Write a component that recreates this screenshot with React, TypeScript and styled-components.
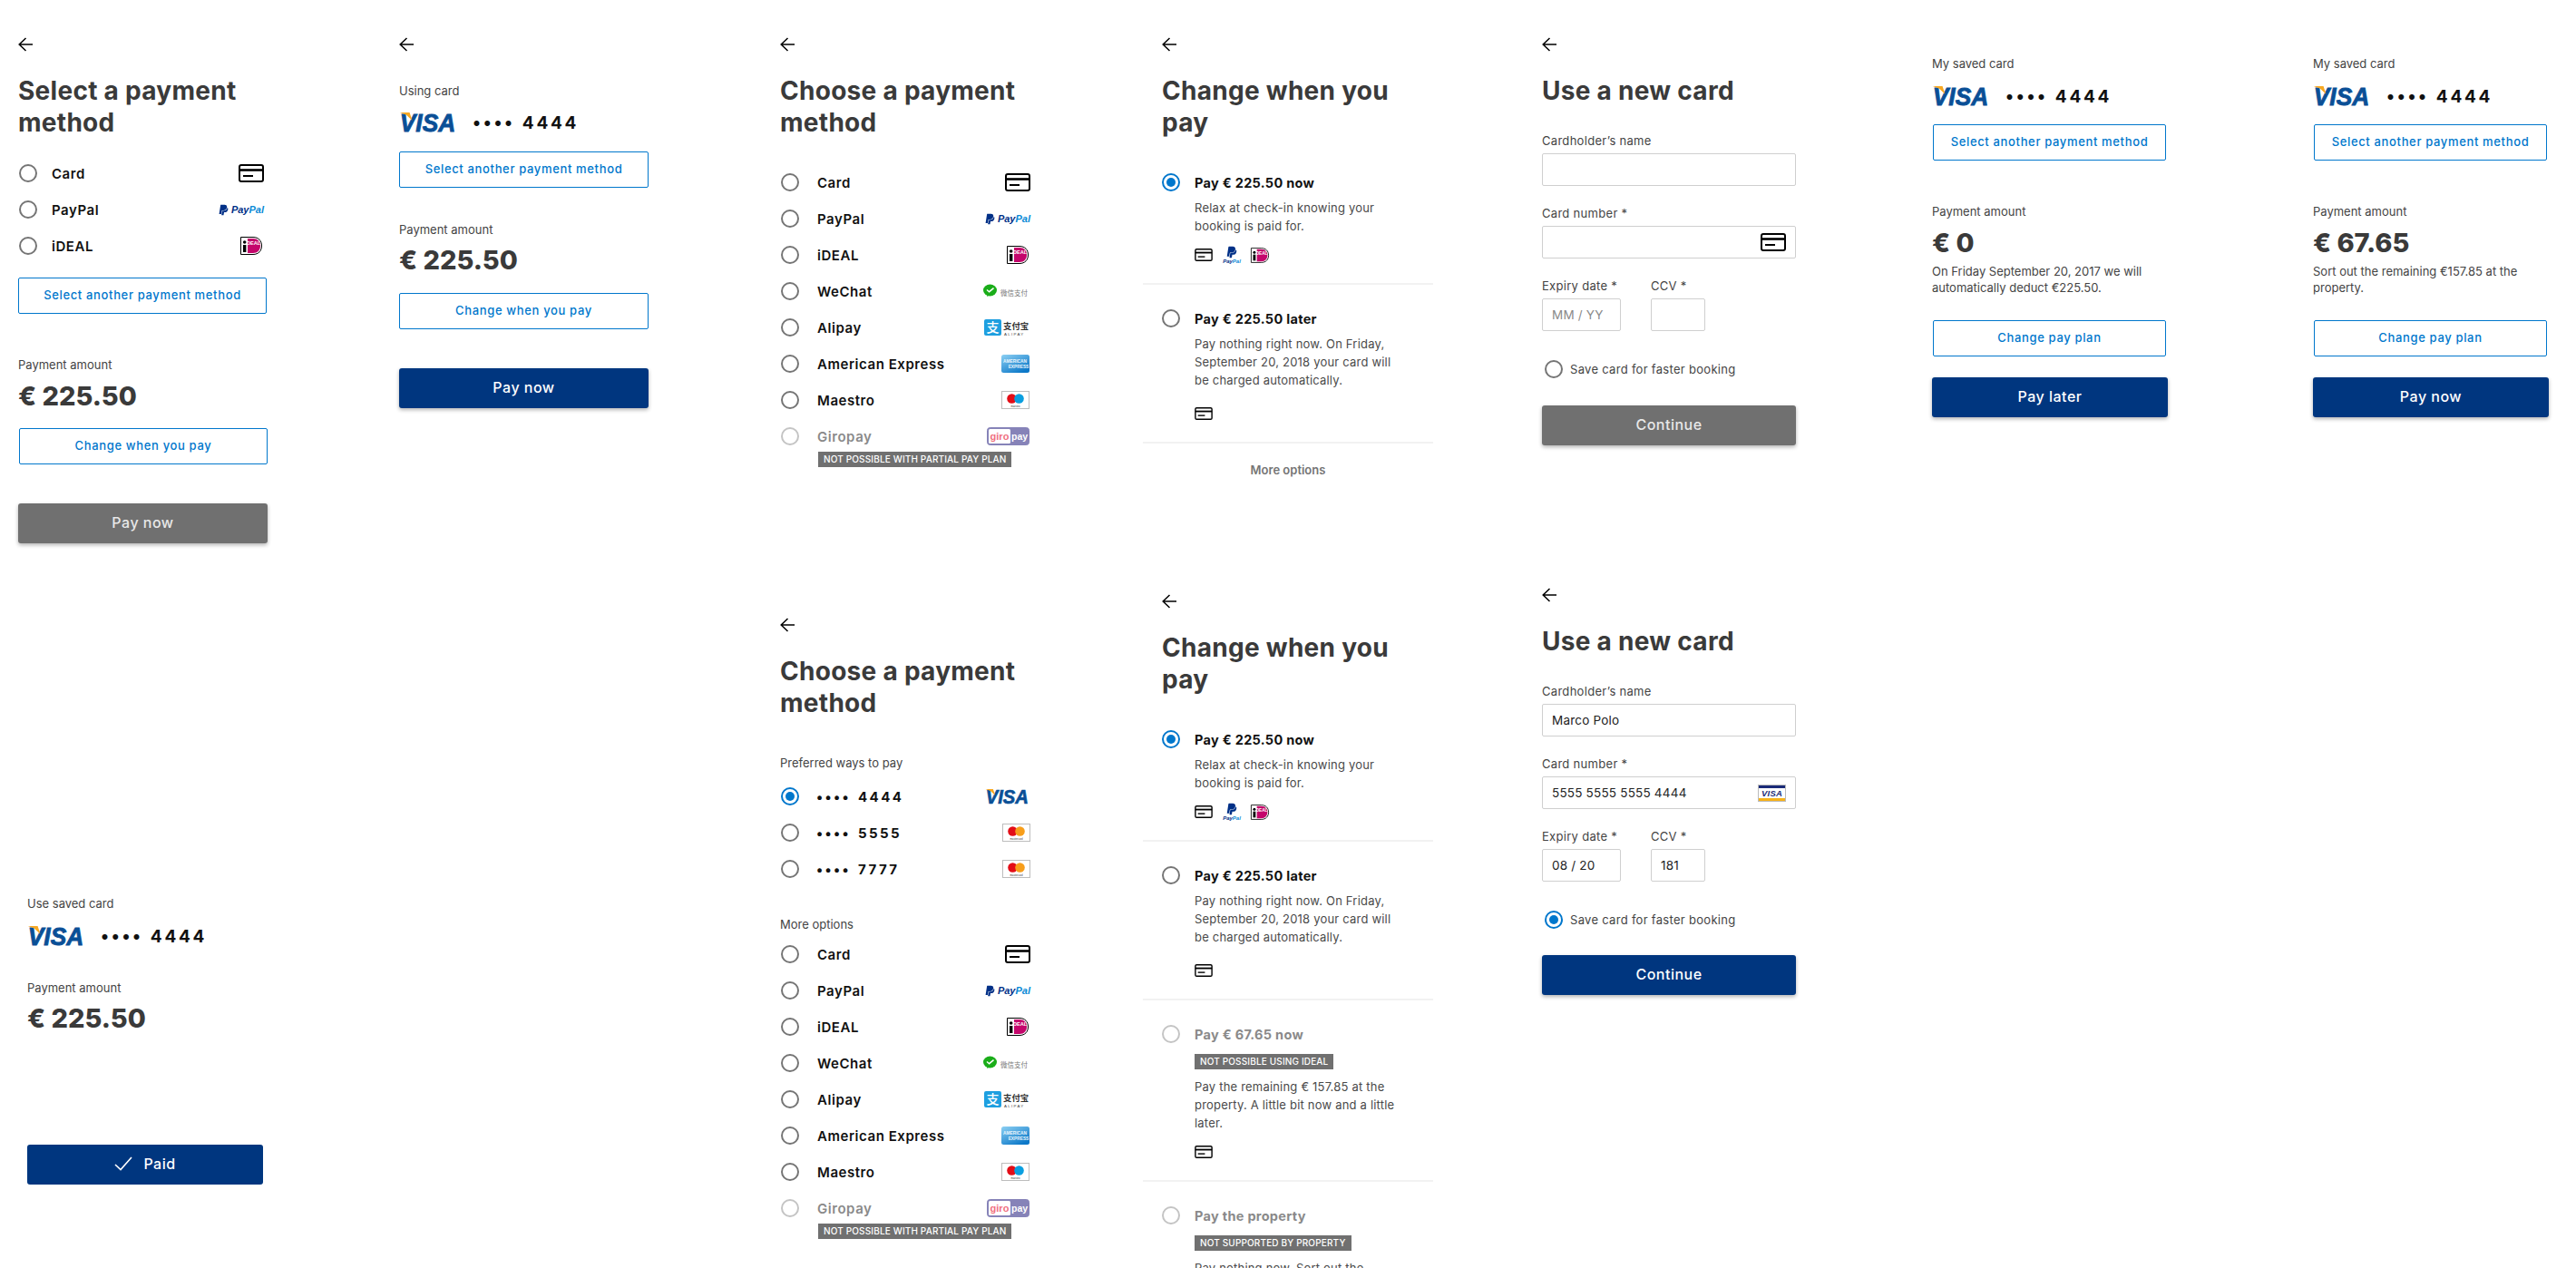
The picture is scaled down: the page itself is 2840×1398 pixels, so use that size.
import * as React from 'react';
import styled, { createGlobalStyle } from 'styled-components';
import { FaPaypal } from 'react-icons/fa';

const GlobalStyle = createGlobalStyle`
  html, body {
    margin: 0;
    padding: 0;
    width: 2840px;
    height: 1398px;
    overflow: hidden;
    background: #fff;
    font-family: Inter, "Noto Sans CJK SC", sans-serif;
    color: #444;
  }
  * { box-sizing: border-box; }
  svg { overflow: visible; }
`;

interface Spaced { $mt?: number; }

const Page = styled.div`
  display: flex;
  width: 2840px;
  height: 1398px;
  overflow: hidden;
`;
const Column = styled.div<{ $width: number }>`
  display: grid;
  grid-template-rows: 640px 758px;
  flex: none;
  width: ${p => p.$width}px;
`;
const Screen = styled.section<{ $top?: number; $left?: number; $right?: number }>`
  padding: ${p => p.$top ?? 41}px ${p => p.$right ?? 0}px 0 ${p => p.$left ?? 20}px;
`;
const BackRow = styled.div`
  height: 16px;
  line-height: 0;
`;
const Heading = styled.h1<Spaced>`
  max-width: 280px;
  margin: ${p => p.$mt ?? 26}px 0 0;
  font-size: 28px;
  line-height: 35px;
  font-weight: 700;
  letter-spacing: 0.28px;
  color: #3a3a3a;
`;
const Label = styled.div<Spaced>`
  margin-top: ${p => p.$mt ?? 0}px;
  font-size: 13px;
  line-height: 20px;
  color: #444;
`;
const CardRow = styled.div<Spaced>`
  display: flex;
  align-items: center;
  gap: 16px;
  height: 22px;
  margin-top: ${p => p.$mt ?? 0}px;
`;
const CardDigits = styled.span<{ $small?: boolean }>`
  display: inline-flex;
  gap: 8px;
  font-size: ${p => (p.$small ? 15 : 19)}px;
  font-weight: 700;
  letter-spacing: ${p => (p.$small ? 2.4 : 2.7)}px;
  color: #111;
  white-space: nowrap;
`;
const Amount = styled.div<Spaced>`
  margin-top: ${p => p.$mt ?? 0}px;
  font-size: 29px;
  line-height: 36px;
  font-weight: 800;
  color: #3a3a3a;
`;
const Note = styled.p<Spaced>`
  max-width: 240px;
  margin: ${p => p.$mt ?? 0}px 0 0;
  font-size: 13px;
  line-height: 18px;
  color: #444;
`;
const OutlineButton = styled.div<Spaced & { $width: number; $shift?: number }>`
  display: flex;
  align-items: center;
  justify-content: center;
  width: ${p => p.$width}px;
  height: 40px;
  margin: ${p => p.$mt ?? 0}px 0 0 ${p => p.$shift ?? 0}px;
  padding-bottom: 2px;
  border: 1px solid #0077cc;
  border-radius: 2px;
  font-size: 13px;
  font-weight: 500;
  letter-spacing: 0.65px;
  color: #0077cc;
`;
const SolidButton = styled.div<Spaced & { $width: number; $muted?: boolean; $flat?: boolean }>`
  display: flex;
  align-items: center;
  justify-content: center;
  gap: 12px;
  width: ${p => p.$width}px;
  height: 44px;
  margin-top: ${p => p.$mt ?? 0}px;
  padding-bottom: 2px;
  border-radius: 3px;
  background: ${p => (p.$muted ? '#707070' : '#00367f')};
  box-shadow: ${p => (p.$flat ? 'none' : '0 2px 4px rgba(0, 0, 0, 0.3)')};
  font-size: 16px;
  font-weight: 500;
  letter-spacing: 0.5px;
  color: ${p => (p.$muted ? '#e8e8e8' : '#fff')};
`;
const MethodList = styled.div<Spaced & { $width: number }>`
  width: ${p => p.$width}px;
  margin-top: ${p => p.$mt ?? 18}px;
`;
const MethodRow = styled.div<{ $gap: number }>`
  display: flex;
  align-items: center;
  gap: ${p => p.$gap}px;
  height: 40px;
  padding-left: 1px;
`;
const MethodName = styled.span<{ $disabled?: boolean }>`
  flex: 1;
  font-size: 15px;
  font-weight: 600;
  letter-spacing: 0.55px;
  color: ${p => (p.$disabled ? '#8a8a8a' : '#111')};
`;
const Radio = styled.span<{ $checked?: boolean; $disabled?: boolean }>`
  display: flex;
  align-items: center;
  justify-content: center;
  flex: none;
  width: 20px;
  height: 20px;
  border-radius: 50%;
  border: 2px solid ${p => (p.$checked ? '#0077cc' : p.$disabled ? '#c4c4c4' : '#757575')};
  &::after {
    content: '';
    display: ${p => (p.$checked ? 'block' : 'none')};
    width: 10px;
    height: 10px;
    border-radius: 50%;
    background: #0077cc;
  }
`;
const Notice = styled.span<Spaced & { $left?: number }>`
  display: block;
  width: fit-content;
  height: 17px;
  margin: ${p => p.$mt ?? 0}px 0 0 ${p => p.$left ?? 0}px;
  padding: 0 6px;
  background: #707070;
  font-size: 10px;
  line-height: 17px;
  font-weight: 500;
  letter-spacing: 0.15px;
  color: #fff;
  white-space: nowrap;
`;
const PlanOption = styled.div<Spaced>`
  display: grid;
  grid-template-columns: 36px 1fr;
  margin-top: ${p => p.$mt ?? 27}px;
  padding-left: 21px;
`;
const PlanTitle = styled.div<{ $disabled?: boolean }>`
  padding-top: 1px;
  font-size: 14.5px;
  line-height: 20px;
  font-weight: 700;
  letter-spacing: 0.3px;
  color: ${p => (p.$disabled ? '#8a8a8a' : '#111')};
`;
const PlanText = styled.p<Spaced>`
  margin: ${p => p.$mt ?? 7}px 0 0;
  max-width: 234px;
  font-size: 13px;
  line-height: 20px;
  letter-spacing: 0.2px;
  color: #4a4a4a;
`;
const PlanIcons = styled.div<Spaced>`
  display: flex;
  align-items: center;
  gap: 11px;
  height: 20px;
  margin-top: ${p => p.$mt ?? 12}px;
`;
const Divider = styled.hr<Spaced>`
  height: 2px;
  margin: ${p => p.$mt ?? 21}px 0 0;
  border: 0;
  background: #f2f2f2;
`;
const MoreOptions = styled.div`
  margin-top: 19px;
  font-size: 13px;
  line-height: 20px;
  font-weight: 600;
  text-align: center;
  color: #757575;
`;
const FieldLabel = styled.div<Spaced>`
  margin-top: ${p => p.$mt ?? 20}px;
  font-size: 13px;
  line-height: 20px;
  letter-spacing: 0.3px;
  color: #444;
`;
const FieldBox = styled.div<{ $width: number; $placeholder?: boolean }>`
  display: flex;
  align-items: center;
  justify-content: space-between;
  width: ${p => p.$width}px;
  height: 36px;
  margin-top: 4px;
  padding: 0 10px;
  border: 1px solid #cfcfcf;
  border-radius: 2px;
  font-size: 13.5px;
  letter-spacing: 0.2px;
  color: ${p => (p.$placeholder ? '#8a8a8a' : '#222')};
`;
const FieldPair = styled.div`
  display: flex;
  gap: 33px;
`;
const SaveRow = styled.div<Spaced>`
  display: flex;
  align-items: center;
  gap: 8px;
  height: 20px;
  margin-top: ${p => p.$mt ?? 32}px;
  padding-left: 3px;
  font-size: 13px;
  letter-spacing: 0.3px;
  color: #444;
`;
const PlanHead = styled.div`
  padding: 0 20px 0 21px;
`;
const LogoWrap = styled.span`
  display: inline-flex;
  align-items: center;
  gap: 2px;
`;
const PayPalWord = styled.span`
  font-family: "Liberation Sans", sans-serif;
  font-size: 11px;
  font-weight: 700;
  font-style: italic;
  color: #003087;
  em { color: #0a8ad6; }
`;
const PayPalStack = styled.span`
  display: flex;
  flex-direction: column;
  align-items: center;
  width: 20px;
  line-height: 1;
  font-family: "Liberation Sans", sans-serif;
  font-size: 6px;
  font-weight: 700;
  font-style: italic;
  color: #003087;
  em { color: #0a8ad6; }
`;
const LogoSlot = styled.span<{ $inset?: number }>`
  display: flex;
  align-items: center;
  flex: none;
  margin-right: ${p => p.$inset ?? 0}px;
`;

const BackArrow = () => (
  <svg width="16" height="16" viewBox="0 0 16 16" fill="none" stroke="#000" strokeWidth="1.5">
    <path d="M16 8H1.5M8.5 1L1.2 8l7.3 7" />
  </svg>
);

const CardIcon = ({ small }: { small?: boolean }) => (
  <svg width={small ? 20 : 28} height={small ? 14 : 20} viewBox="0 0 28 20" fill="none" stroke="#000" strokeWidth="2">
    <rect x="1" y="1" width="26" height="18" rx="2" />
    <path d="M1 6.5h26" strokeWidth="2.6" />
    <path d="M5 13h11" />
  </svg>
);

const VisaLogo = ({ width = 65 }: { width?: number }) => (
  <svg width={width} height={width * 0.33} viewBox="0 0 65 22">
    <text x="0" y="21.5" fontFamily="'Liberation Sans', sans-serif" fontSize="29" fontWeight="700" fontStyle="italic" fill="#0a4f96" stroke="#0a4f96" strokeWidth="0.9" textLength="63" lengthAdjust="spacingAndGlyphs">VISA</text>
    <polygon points="0,0 11,0 14,9 7,2.5" fill="#f7a823" />
  </svg>
);

const VisaMini = () => (
  <svg width="31" height="19" viewBox="0 0 31 19">
    <rect x="0.5" y="0.5" width="30" height="18" fill="#fff" stroke="#bbb" />
    <rect x="1" y="1" width="29" height="3" fill="#1a2a78" />
    <rect x="1" y="15" width="29" height="3" fill="#f7b21a" />
    <text x="15.5" y="13" textAnchor="middle" fontFamily="'Liberation Sans', sans-serif" fontSize="9.5" fontWeight="700" fontStyle="italic" fill="#1a2a78">VISA</text>
  </svg>
);

const PayPalLogo = () => (
  <LogoWrap>
    <FaPaypal size={13} color="#003087" />
    <PayPalWord>Pay<em>Pal</em></PayPalWord>
  </LogoWrap>
);

const IdealLogo = ({ small }: { small?: boolean }) => (
  <svg width={small ? 20 : 24} height={small ? 17 : 20} viewBox="0 0 24 20">
    <path d="M.5.5H14c6 0 9.5 4 9.5 9.5S20 19.5 14 19.5H.5z" fill="#fff" stroke="#000" />
    <path d="M8 2h6c5 0 8 3.5 8 8s-3 8-8 8H8z" fill="#c4066b" />
    <rect x="3" y="9" width="3.4" height="8" fill="#000" />
    <circle cx="4.7" cy="6" r="1.8" fill="#000" />
    <text x="14.5" y="9" textAnchor="middle" fontFamily="'Liberation Sans', sans-serif" fontSize="5.6" fontWeight="700" fill="#fff">DEAL</text>
  </svg>
);

const WeChatLogo = () => (
  <svg width="50" height="16" viewBox="0 0 50 16">
    <ellipse cx="7.5" cy="7" rx="7.5" ry="6.5" fill="#1aad19" />
    <path d="M4 14l1-3 3 1z" fill="#1aad19" />
    <path d="M4 6.5l2.6 2.2L11.5 4.6" fill="none" stroke="#fff" strokeWidth="1.5" />
    <text x="19" y="12.5" fontFamily="'Noto Sans CJK SC', sans-serif" fontSize="7.5" fill="#777">微信支付</text>
  </svg>
);

const AlipayLogo = () => (
  <svg width="50" height="19" viewBox="0 0 50 19">
    <rect width="19" height="18" rx="2" fill="#1e9fe0" />
    <text x="9.5" y="14" textAnchor="middle" fontFamily="'Noto Sans CJK SC', sans-serif" fontSize="14" fontWeight="500" fill="#fff">支</text>
    <text x="21" y="11" fontFamily="'Noto Sans CJK SC', sans-serif" fontSize="9.4" fontWeight="700" fill="#333">支付宝</text>
    <text x="22" y="18" fontFamily="'Liberation Sans', sans-serif" fontSize="4.4" letterSpacing="1.3" fill="#444">ALIPAY</text>
  </svg>
);

const AmexLogo = () => (
  <svg width="31" height="20" viewBox="0 0 31 20">
    <defs>
      <linearGradient id="amex" x1="0" y1="0" x2="0.7" y2="1">
        <stop offset="0" stopColor="#8dd0f3" />
        <stop offset="1" stopColor="#0c78c8" />
      </linearGradient>
    </defs>
    <rect width="31" height="20" rx="2.5" fill="url(#amex)" />
    <text x="15" y="8.6" textAnchor="middle" fontFamily="'Liberation Sans', sans-serif" fontSize="4.8" fontWeight="700" fill="#eaf6fd">AMERICAN</text>
    <text x="19" y="14.8" textAnchor="middle" fontFamily="'Liberation Sans', sans-serif" fontSize="4.8" fontWeight="700" fill="#eaf6fd">EXPRESS</text>
  </svg>
);

const CircleCardLogo = ({ right, name }: { right: string; name: string }) => (
  <svg width="31" height="20" viewBox="0 0 31 20">
    <rect x="0.5" y="0.5" width="30" height="19" fill="#fff" stroke="#bdbdbd" />
    <circle cx="11.5" cy="8.5" r="5.3" fill="#e30d17" />
    <circle cx="19.5" cy="8.5" r="5.3" fill={right} />
    <text x="15.5" y="17.5" textAnchor="middle" fontFamily="'Liberation Sans', sans-serif" fontSize="2.8" fill="#333">{name}</text>
  </svg>
);

const GiropayLogo = () => (
  <svg width="47" height="20" viewBox="0 0 47 20">
    <rect x="0.5" y="0.5" width="46" height="19" rx="3" fill="#8683b8" stroke="#8683b8" />
    <rect x="2" y="2" width="24" height="16" rx="1.5" fill="#fff" />
    <text x="3.6" y="13.6" fontFamily="'Liberation Sans', sans-serif" fontSize="11" fontWeight="700" fill="#f0717f">giro</text>
    <text x="27" y="13.6" fontFamily="'Liberation Sans', sans-serif" fontSize="10.5" fontWeight="700" fill="#fff">pay</text>
  </svg>
);

const methods = [
  { name: 'Card', logo: <CardIcon />, inset: 0 },
  { name: 'PayPal', logo: <PayPalLogo />, inset: 0 },
  { name: 'iDEAL', logo: <IdealLogo />, inset: 2 },
  { name: 'WeChat', logo: <WeChatLogo />, inset: 2 },
  { name: 'Alipay', logo: <AlipayLogo />, inset: 1 },
  { name: 'American Express', logo: <AmexLogo />, inset: 1 },
  { name: 'Maestro', logo: <CircleCardLogo right="#0a9fe0" name="maestro" />, inset: 1 },
];

const Methods = ({ list, gap, giropay }: { list: typeof methods; gap: number; giropay?: boolean }) => (
  <>
    {list.map(m => (
      <MethodRow $gap={gap} key={m.name}>
        <Radio />
        <MethodName>{m.name}</MethodName>
        <LogoSlot $inset={m.inset}>{m.logo}</LogoSlot>
      </MethodRow>
    ))}
    {giropay && (
      <>
        <MethodRow $gap={gap}>
          <Radio $disabled />
          <MethodName $disabled>Giropay</MethodName>
          <LogoSlot $inset={1}><GiropayLogo /></LogoSlot>
        </MethodRow>
        <Notice $left={42} $mt={-3}>NOT POSSIBLE WITH PARTIAL PAY PLAN</Notice>
      </>
    )}
  </>
);

const Digits = ({ last, small }: { last: string; small?: boolean }) => (
  <CardDigits $small={small}>
    <span>••••</span>
    <span>{last}</span>
  </CardDigits>
);

const CardForm = ({ top, filled }: { top: number; filled?: boolean }) => (
  <Screen $top={top}>
    <BackRow><BackArrow /></BackRow>
    <Heading>Use a new card</Heading>
    <FieldLabel $mt={27}>Cardholder’s name</FieldLabel>
    <FieldBox $width={280}>{filled && 'Marco Polo'}</FieldBox>
    <FieldLabel>Card number *</FieldLabel>
    <FieldBox $width={280}>
      <span>{filled && '5555 5555 5555 4444'}</span>
      {filled ? <VisaMini /> : <CardIcon />}
    </FieldBox>
    <FieldPair>
      <div>
        <FieldLabel>Expiry date *</FieldLabel>
        <FieldBox $width={87} $placeholder={!filled}>{filled ? '08 / 20' : 'MM / YY'}</FieldBox>
      </div>
      <div>
        <FieldLabel>CCV *</FieldLabel>
        <FieldBox $width={60}>{filled && '181'}</FieldBox>
      </div>
    </FieldPair>
    <SaveRow>
      <Radio $checked={filled} />
      Save card for faster booking
    </SaveRow>
    <SolidButton $width={280} $mt={filled ? 29 : 30} $muted={!filled}>Continue</SolidButton>
  </Screen>
);

const PlanIconsAll = () => (
  <PlanIcons>
    <CardIcon small />
    <PayPalStack>
      <FaPaypal size={14} color="#003087" />
      <span>Pay<em>Pal</em></span>
    </PayPalStack>
    <IdealLogo small />
  </PlanIcons>
);
const PlanIconCard = ({ mt }: { mt?: number }) => (
  <PlanIcons $mt={mt}><CardIcon small /></PlanIcons>
);

const SavedCard = ({ amount, note, action }: { amount: string; note: React.ReactNode; action: string }) => (
  <Screen $top={60}>
    <Label>My saved card</Label>
    <CardRow $mt={15}><VisaLogo /><Digits last="4444" /></CardRow>
    <OutlineButton $width={257} $shift={1} $mt={20}>Select another payment method</OutlineButton>
    <Label $mt={46}>Payment amount</Label>
    <Amount $mt={7}>{amount}</Amount>
    <Note $mt={4}>{note}</Note>
    <OutlineButton $width={257} $shift={1} $mt={27}>Change pay plan</OutlineButton>
    <SolidButton $width={260} $mt={23}>{action}</SolidButton>
  </Screen>
);

const PlanBase = () => (
  <>
    <PlanHead>
      <BackRow><BackArrow /></BackRow>
      <Heading>Change when you pay</Heading>
    </PlanHead>
    <PlanOption $mt={38}>
      <Radio $checked />
      <div>
        <PlanTitle>Pay € 225.50 now</PlanTitle>
        <PlanText>Relax at check-in knowing your booking is paid for.</PlanText>
        <PlanIconsAll />
      </div>
    </PlanOption>
    <Divider />
    <PlanOption>
      <Radio />
      <div>
        <PlanTitle>Pay € 225.50 later</PlanTitle>
        <PlanText>Pay nothing right now. On Friday, September 20, 2018 your card will be charged automatically.</PlanText>
        <PlanIconCard mt={17} />
      </div>
    </PlanOption>
    <Divider />
  </>
);

export default function App() {
  return (
    <Page>
      <GlobalStyle />
      <Column $width={420}>
        <Screen>
          <BackRow><BackArrow /></BackRow>
          <Heading>Select a payment method</Heading>
          <MethodList $width={271}>
            <Methods list={methods.slice(0, 3)} gap={16} />
          </MethodList>
          <OutlineButton $width={274} $mt={15}>Select another payment method</OutlineButton>
          <Label $mt={46}>Payment amount</Label>
          <Amount $mt={7}>€ 225.50</Amount>
          <OutlineButton $width={274} $shift={1} $mt={17}>Change when you pay</OutlineButton>
          <SolidButton $width={275} $mt={43} $muted>Pay now</SolidButton>
        </Screen>
        <Screen $top={346} $left={30}>
          <Label>Use saved card</Label>
          <CardRow $mt={15}><VisaLogo /><Digits last="4444" /></CardRow>
          <Label $mt={36}>Payment amount</Label>
          <Amount $mt={6}>€ 225.50</Amount>
          <SolidButton $width={260} $mt={121} $flat>
            <svg width="20" height="16" viewBox="0 0 20 16" fill="none" stroke="#fff" strokeWidth="1.6">
              <path d="M1 9l6 5.5L19 1" />
            </svg>
            Paid
          </SolidButton>
        </Screen>
      </Column>
      <Column $width={420}>
        <Screen>
          <BackRow><BackArrow /></BackRow>
          <Label $mt={33}>Using card</Label>
          <CardRow $mt={14}><VisaLogo /><Digits last="4444" /></CardRow>
          <OutlineButton $width={275} $mt={21}>Select another payment method</OutlineButton>
          <Label $mt={36}>Payment amount</Label>
          <Amount $mt={6}>€ 225.50</Amount>
          <OutlineButton $width={275} $mt={18}>Change when you pay</OutlineButton>
          <SolidButton $width={275} $mt={43}>Pay now</SolidButton>
        </Screen>
      </Column>
      <Column $width={420}>
        <Screen>
          <BackRow><BackArrow /></BackRow>
          <Heading>Choose a payment method</Heading>
          <MethodList $width={276} $mt={28}>
            <Methods list={methods} gap={20} giropay />
          </MethodList>
        </Screen>
        <Screen>
          <BackRow><BackArrow /></BackRow>
          <Heading>Choose a payment method</Heading>
          <Label $mt={38}>Preferred ways to pay</Label>
          <MethodList $width={276} $mt={7}>
            <MethodRow $gap={19}>
              <Radio $checked />
              <MethodName><Digits last="4444" small /></MethodName>
              <VisaLogo width={50} />
            </MethodRow>
            <MethodRow $gap={19}>
              <Radio />
              <MethodName><Digits last="5555" small /></MethodName>
              <CircleCardLogo right="#f79e1b" name="mastercard" />
            </MethodRow>
            <MethodRow $gap={19}>
              <Radio />
              <MethodName><Digits last="7777" small /></MethodName>
              <CircleCardLogo right="#f79e1b" name="mastercard" />
            </MethodRow>
          </MethodList>
          <Label $mt={31}>More options</Label>
          <MethodList $width={276} $mt={3}>
            <Methods list={methods} gap={20} giropay />
          </MethodList>
        </Screen>
      </Column>
      <Column $width={420}>
        <Screen $left={0} $right={100}>
          <PlanBase />
          <MoreOptions>More options</MoreOptions>
        </Screen>
        <Screen $top={15} $left={0} $right={100}>
          <PlanBase />
          <PlanOption>
            <Radio $disabled />
            <div>
              <PlanTitle $disabled>Pay € 67.65 now</PlanTitle>
              <Notice $mt={11}>NOT POSSIBLE USING IDEAL</Notice>
              <PlanText $mt={9}>Pay the remaining € 157.85 at the property. A little bit now and a little later.</PlanText>
              <PlanIconCard />
            </div>
          </PlanOption>
          <Divider />
          <PlanOption>
            <Radio $disabled />
            <div>
              <PlanTitle $disabled>Pay the property</PlanTitle>
              <Notice $mt={11}>NOT SUPPORTED BY PROPERTY</Notice>
              <PlanText $mt={9}>Pay nothing now. Sort out the<br />whole amount at the property.</PlanText>
            </div>
          </PlanOption>
        </Screen>
      </Column>
      <Column $width={430}>
        <CardForm top={41} />
        <CardForm top={8} filled />
      </Column>
      <Column $width={420}>
        <SavedCard
          amount="€ 0"
          note="On Friday September 20, 2017 we will automatically deduct €225.50."
          action="Pay later"
        />
      </Column>
      <Column $width={310}>
        <SavedCard
          amount="€ 67.65"
          note="Sort out the remaining €157.85 at the property."
          action="Pay now"
        />
      </Column>
    </Page>
  );
}
